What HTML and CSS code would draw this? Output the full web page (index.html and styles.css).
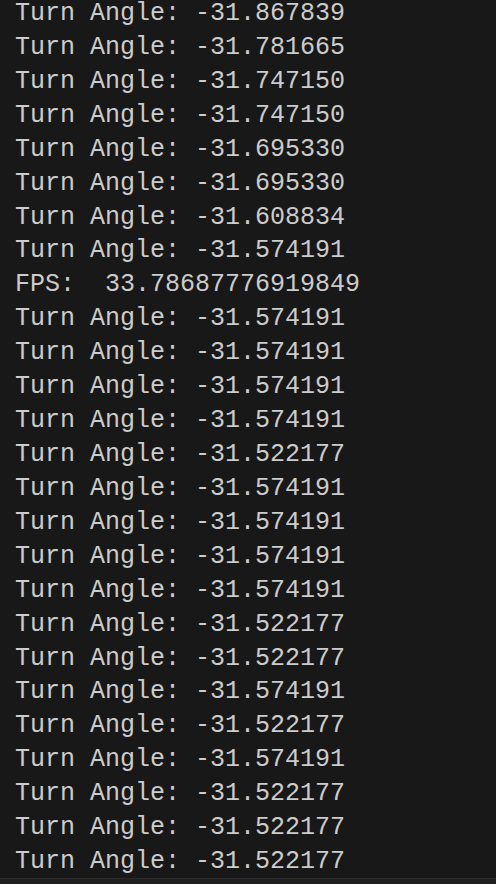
FILE: index.html
```html
<!DOCTYPE html>
<html>
<head>
<meta charset="utf-8">
<link rel="stylesheet" href="styles.css">
</head>
<body>
<div class="terminal">
<pre class="output">Turn Angle: -31.867839
Turn Angle: -31.781665
Turn Angle: -31.747150
Turn Angle: -31.747150
Turn Angle: -31.695330
Turn Angle: -31.695330
Turn Angle: -31.608834
Turn Angle: -31.574191
FPS:  33.78687776919849
Turn Angle: -31.574191
Turn Angle: -31.574191
Turn Angle: -31.574191
Turn Angle: -31.574191
Turn Angle: -31.522177
Turn Angle: -31.574191
Turn Angle: -31.574191
Turn Angle: -31.574191
Turn Angle: -31.574191
Turn Angle: -31.522177
Turn Angle: -31.522177
Turn Angle: -31.574191
Turn Angle: -31.522177
Turn Angle: -31.574191
Turn Angle: -31.522177
Turn Angle: -31.522177
Turn Angle: -31.522177</pre>
</div>
<div class="statusline"></div>
</body>
</html>
```
FILE: styles.css
```css
html, body {
  margin: 0;
  padding: 0;
  background: #181818;
  height: 100%;
  overflow: hidden;
}
body {
  display: flex;
  flex-direction: column;
}
.terminal {
  flex: 1;
  overflow: hidden;
  padding-left: 15px;
}
.output {
  margin: -3px 0 0 0;
  font-family: "Liberation Mono", monospace;
  font-size: 25px;
  line-height: 33.92px;
  color: #cccccc;
}
.statusline {
  height: 5px;
  border-top: 1px solid #2b2b2b;
  background: #1f1f1f;
}
```
